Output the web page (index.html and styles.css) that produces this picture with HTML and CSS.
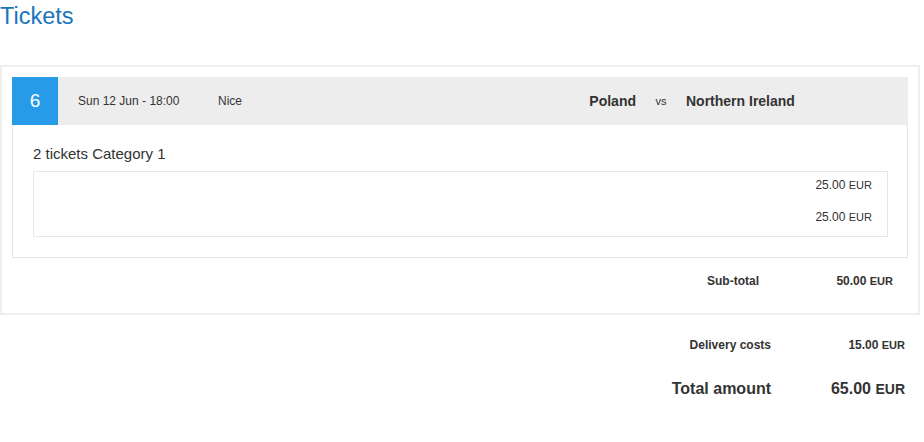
FILE: index.html
```html
<!DOCTYPE html>
<html>
<head>
<meta charset="utf-8">
<link rel="stylesheet" href="styles.css">
</head>
<body>
<div class="page">
  <h1 class="title">Tickets</h1>
  <div class="order">
    <div class="card">
      <div class="match">
        <div class="match-no">6</div>
        <div class="match-date">Sun 12 Jun - 18:00</div>
        <div class="match-city">Nice</div>
        <div class="team home">Poland</div>
        <div class="vs">vs</div>
        <div class="team away">Northern Ireland</div>
      </div>
      <div class="card-body">
        <div class="cat">2 tickets Category 1</div>
        <div class="prices">
          <div class="price-row">25.00 <span class="cur">EUR</span></div>
          <div class="price-row">25.00 <span class="cur">EUR</span></div>
        </div>
      </div>
    </div>
    <div class="sum-row subtotal">
      <div class="sum-label">Sub-total</div>
      <div class="sum-value">50.00 <span class="cur">EUR</span></div>
    </div>
  </div>
  <div class="sum-row delivery">
    <div class="sum-label">Delivery costs</div>
    <div class="sum-value">15.00 <span class="cur">EUR</span></div>
  </div>
  <div class="sum-row total">
    <div class="sum-label">Total amount</div>
    <div class="sum-value">65.00 <span class="cur">EUR</span></div>
  </div>
</div>
</body>
</html>
```

FILE: styles.css
```css
html, body {
  margin: 0;
  padding: 0;
  background: #fff;
}
body {
  font-family: "Liberation Sans", Arial, sans-serif;
  color: #333;
}
.page {
  width: 920px;
}
.title {
  margin: 0 0 33px 0;
  font-size: 23.5px;
  line-height: 32px;
  font-weight: normal;
  color: #1b75bb;
}
.order {
  border: 2px solid #eeeeee;
  padding: 10px 10px 10px 10px;
}
.card {
  border: 1px solid #e6e6e6;
}
.match {
  display: flex;
  align-items: center;
  height: 48px;
  margin: -1px -1px 0 -1px;
  background: #ededed;
}
.match-no {
  width: 46px;
  height: 48px;
  background: #279be8;
  color: #fff;
  font-size: 19px;
  line-height: 48px;
  text-align: center;
}
.match-date {
  width: 140px;
  margin-left: 20px;
  font-size: 12px;
}
.match-city {
  font-size: 12px;
}
.team {
  font-size: 14px;
  font-weight: bold;
}
.home {
  margin-left: auto;
}
.vs {
  width: 50px;
  text-align: center;
  font-size: 11px;
}
.away {
  width: 222px;
}
.card-body {
  padding: 20px 19px 20px 20px;
}
.cat {
  font-size: 15px;
  line-height: 18px;
  margin-bottom: 8px;
}
.prices {
  border: 1px solid #e6e6e6;
  padding: 1px 15px 7px 0;
}
.price-row {
  height: 24px;
  line-height: 24px;
  margin-bottom: 8px;
  text-align: right;
  font-size: 12px;
}
.price-row:last-child {
  margin-bottom: 0;
}
.cur {
  font-size: 11px;
}
.sum-row {
  display: flex;
  justify-content: flex-end;
  align-items: center;
  padding-right: 15px;
  font-weight: bold;
}
.sum-label {
  font-size: 12px;
  text-align: right;
}
.sum-value {
  width: 134px;
  text-align: right;
  font-size: 12px;
}
.subtotal {
  height: 44px;
  padding-top: 1px;
}
.delivery {
  height: 40px;
  margin-top: 10px;
}
.total {
  height: 48px;
}
.total .sum-label {
  font-size: 16px;
}
.total .sum-value {
  font-size: 16px;
}
.total .cur {
  font-size: 14px;
}
```
